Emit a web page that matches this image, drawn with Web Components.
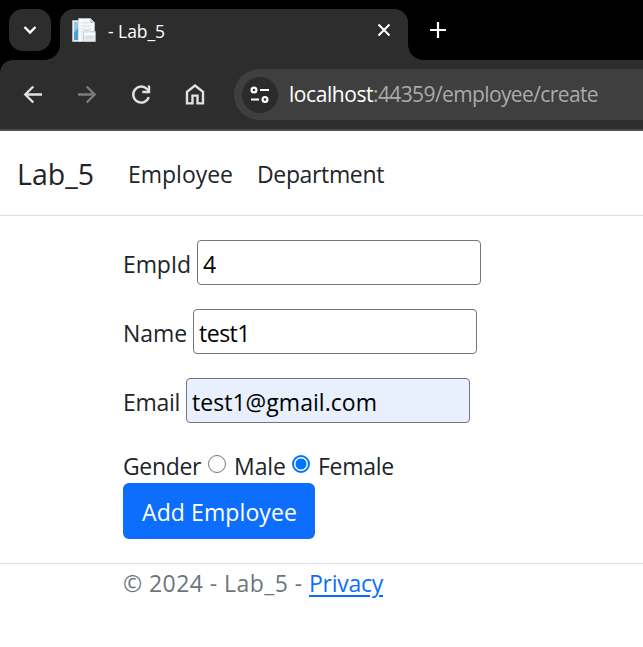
<!DOCTYPE html>
<html lang="en"><head><meta charset="utf-8"><title>- Lab_5</title>
<style>
body{margin:0;width:643px;height:647px;overflow:hidden;background:#fff;font-family:"Open Sans","Noto Sans",sans-serif;font-size:23px;line-height:36px;color:#212529}
</style></head><body>
<app-window></app-window>
<script>
const define=(name,html,setup)=>customElements.define(name,class extends HTMLElement{
  connectedCallback(){
    if(this.shadowRoot)return;
    const t=document.createElement('template');t.innerHTML=html;
    this.attachShadow({mode:'open'}).append(t.content.cloneNode(true));
    if(setup)setup(this,this.shadowRoot);
  }
});
// Tracks its text so that it occupies the advance width given in "w".
define('fit-text',`<style>:host{display:inline-block;white-space:pre;flex:none}</style><span><slot></slot></span>`,(h,r)=>{
  const fit=()=>{
    h.style.letterSpacing='0px';
    const n=r.querySelector('span').getBoundingClientRect().width;
    const w=+h.getAttribute('w');
    if(n)h.style.letterSpacing=((w-n)/h.textContent.length)+'px';
    h.style.width=w+'px';
  };
  fit();requestAnimationFrame(fit);
});
define('tab-strip',`<style>
:host{display:flex;height:60px;background:#000;align-items:flex-start;color:#fff}
.list{width:42px;height:42px;margin:9px 0 0 9px;border-radius:14px;background:#2d2d2d}
.tab{position:relative;box-sizing:border-box;margin:9px 0 0 9px;width:348px;height:51px;background:#2d2d2d;border-radius:14px 14px 0 0;display:flex;padding-left:12px}
.tab:before,.tab:after{content:"";position:absolute;bottom:0;width:15px;height:15px}
.tab:before{left:-15px;background:radial-gradient(circle at 0 0,#0000 14.5px,#2d2d2d 15px)}
.tab:after{right:-15px;background:radial-gradient(circle at 100% 0,#0000 14.5px,#2d2d2d 15px)}
svg{display:block;flex:none}
.fav{margin-top:9px}
fit-text{margin:5px 0 0 10px;font-size:17.5px;line-height:34px}
.x{margin:14px 0 0 auto;padding-right:17px}
.plus{margin:22px 0 0 22px}
</style>
<div class="list"><svg width="42" height="42" fill="none" stroke="#fff" stroke-width="2.4"><path d="M15.5 18l5.5 5.5 5.5-5.5"/></svg></div>
<div class="tab"><svg class="fav" width="26" height="26">
<path fill="#edf1f4" stroke="#ccd3d8" stroke-width=".6" d="M.5 2.5h8v21h-8z"/><path fill="#4a9fd5" d="M2 4h4v18H2z"/><path fill="#8fc8eb" d="M2 4h4v6L2 15z"/>
<path fill="#f5f7f9" stroke="#ccd3d8" stroke-width=".6" d="M6.5.5h12l4 4v19h-16z"/><path fill="#c6ccd2" d="M18 .5l4.5 4.5H18z"/><path stroke="#e3e7eb" stroke-width="1.5" d="M9 5h8M9 8h11M9 11h11M9 14h3M9 17h3M9 20h3"/>
<path fill="#e4e9ee" stroke="#b7c0c8" stroke-width=".6" d="M11.5 13.5l1-1h5l1 1h5v10h-12z"/><path fill="#fff" d="M12 15h11v2H12z"/><path fill="#cbd3db" d="M14 19h7v1h-7z"/></svg>
<fit-text w="57">- Lab_5</fit-text>
<svg class="x" width="14" height="14" fill="none" stroke="#fff" stroke-width="2"><path d="M1.5 1.5l11 11m0-11l-11 11"/></svg></div>
<svg class="plus" width="16" height="16" fill="none" stroke="#fff" stroke-width="2.2"><path d="M8 0v16M0 8h16"/></svg>`);
define('address-bar',`<style>
:host{display:block;background:#000}
.bar{box-sizing:border-box;height:71px;background:#2d2d2d;border-bottom:2px solid #505050;border-top-left-radius:13px;display:flex;align-items:flex-start;padding-top:9px}
svg{display:block;flex:none}
.nav{margin-top:8px}
.url{box-sizing:border-box;flex:1;height:51px;margin-left:13px;background:#3f3f3f;border-radius:26px 0 0 26px;display:flex;align-items:center;padding-left:8px;color:#fff;font-size:21px}
.site{width:36px;height:36px;border-radius:50%;background:#2b2b2b}
.a{margin:0 0 1px 11px;color:#fff}.b{margin:0 0 1px;color:#aaa}
</style><div class="bar">
<svg class="nav" width="221" height="36" fill="none" stroke="#e1e1e1" stroke-width="2.4">
<path d="M42 17.5H26M33.3 9.5l-8 8 8 8"/><path stroke="#7b7b7b" d="M78 17.5h16M86.7 9.5l8 8-8 8"/>
<path d="M148.8 20.2a8 8 0 1 1-1.8-8.2l2 2"/><path d="M149 8.5V15h-6.7"/>
<path d="M187 26.4V14.8l8-6.2 8 6.2v11.6h-5.5v-7.8h-5v7.8z"/></svg>
<div class="url"><div class="site"><svg width="36" height="36" fill="none" stroke="#fff" stroke-width="2.2"><circle cx="12" cy="13" r="2.4"/><path d="M18 13h9M9 22.5h8"/><circle cx="23" cy="22.5" r="2.4"/></svg></div>
<fit-text class="a" w="84">localhost</fit-text><fit-text class="b" w="225">:44359/employee/create</fit-text></div></div>`);
define('site-nav',`<style>:host{display:flex;box-sizing:border-box;height:85px;border-bottom:1px solid #dee2e6;padding:0 0 0 17px;color:#212529;align-items:flex-start}
.brand{font-size:28.5px;line-height:86px}.e{margin:25px 0 0 34px}.d{margin:25px 0 0 24px}</style>
<fit-text class="brand" w="77">Lab_5</fit-text><fit-text class="e" w="105">Employee</fit-text><fit-text class="d" w="127">Department</fit-text>`);
define('form-field',`<style>:host{display:flex;height:45px;margin-bottom:24px;align-items:stretch}
.label{padding-top:6px}.box{box-sizing:border-box;width:284px;height:45px;margin-left:6px;border:1px solid #767676;border-radius:4px;padding:5px 0 0 5px;color:#000;background:#fff}
:host([autofilled]) .box{background:#e8f0fe}</style>
<div class="label"><slot name="label"></slot></div><div class="box" role="textbox"><slot></slot></div>`);
define('radio-option',`<style>:host{display:flex}i{box-sizing:border-box;width:18px;height:18px;margin-top:8px;border:1.5px solid #767676;border-radius:50%;margin-right:7px}
:host([checked]) i{border:2px solid #0075ff;background:radial-gradient(circle,#0075ff 5.2px,#fff 5.8px)}</style><i></i><slot></slot>`);
define('primary-button',`<style>:host{display:flex;box-sizing:border-box;width:192px;height:56px;padding:11px 0 0 19px;border-radius:6px;background:#0d6efd;color:#fff}</style><slot></slot>`);
define('employee-form',`<style>:host{display:block;box-sizing:border-box;height:347px;padding:24px 0 0 123px}.gender{display:flex;height:36px}.gender fit-text{margin-top:1px}.f{margin-left:6px}.m{margin-left:7px}radio-option fit-text{margin-left:1px}</style>
<form-field><fit-text slot="label" w="68">EmpId</fit-text><fit-text w="13">4</fit-text></form-field>
<form-field><fit-text slot="label" w="64">Name</fit-text><fit-text w="51">test1</fit-text></form-field>
<form-field autofilled><fit-text slot="label" w="57">Email</fit-text><fit-text w="185">test1@gmail.com</fit-text></form-field>
<div class="gender"><fit-text w="78">Gender</fit-text><radio-option class="m"><fit-text w="52">Male</fit-text></radio-option><radio-option class="f" checked><fit-text w="76">Female</fit-text></radio-option></div>
<primary-button><fit-text w="155">Add Employee</fit-text></primary-button>`);
define('site-footer',`<style>:host{display:flex;border-top:1px solid #dee2e6;padding:1px 0 0 123px;color:#6c757d}
a{color:#0d6efd}fit-text.p{text-decoration:underline;text-decoration-thickness:2px;text-underline-offset:3px}</style>
<fit-text w="186">© 2024 - Lab_5 - </fit-text><a><fit-text class="p" w="74">Privacy</fit-text></a>`);
define('app-window',`<style>:host{display:flex;flex-direction:column;width:643px;height:647px;overflow:hidden}</style>
<tab-strip></tab-strip><address-bar></address-bar><site-nav></site-nav><employee-form></employee-form><site-footer></site-footer>`);
</script></body></html>
